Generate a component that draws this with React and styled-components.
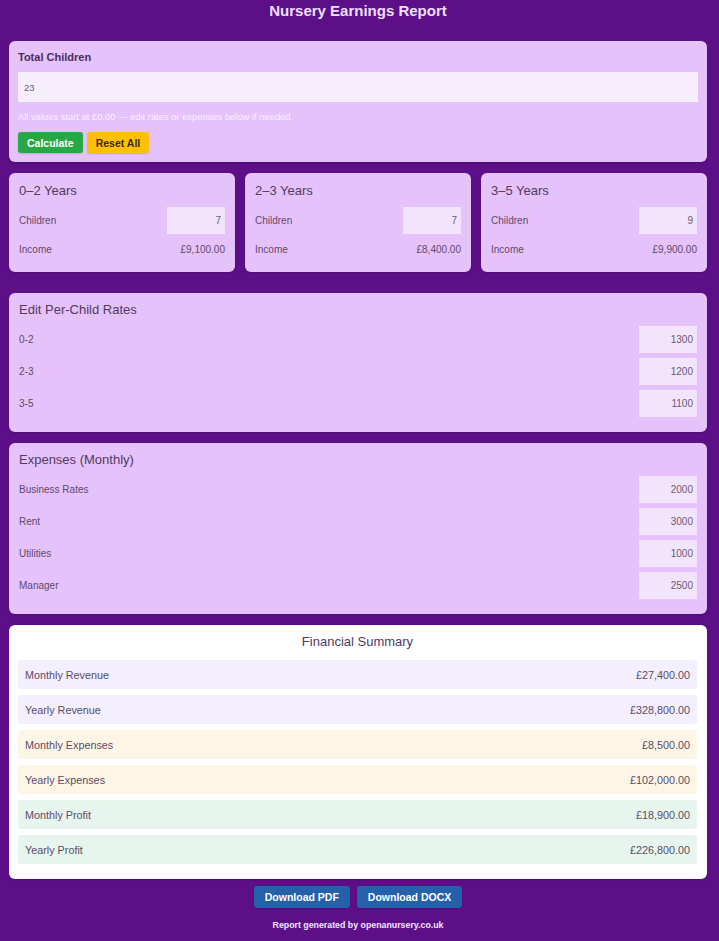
import React from "react"
import styled, { createGlobalStyle } from "styled-components"

const GlobalStyle = createGlobalStyle`
  html, body {
    margin: 0;
    padding: 0;
    background: #5d0f88;
    font-family: "Liberation Sans", Arial, sans-serif;
  }
`

const Page = styled.div`
  padding: 0 12px 8px 9px;
  min-height: 941px;
  box-sizing: border-box;
`

const Title = styled.h1`
  margin: 0 0 21px;
  padding-top: 2px;
  font-size: 15px;
  line-height: 18px;
  font-weight: bold;
  color: #efe0ff;
  text-align: center;
`

const Card = styled.section`
  background: ${(p) => (p.$white ? "#ffffff" : "#e6c2fb")};
  border-radius: 6px;
  padding: ${(p) => p.$pad || "10px 9px 10px 9px"};
  margin-bottom: ${(p) => p.$mb || "11px"};
  box-sizing: border-box;
  box-shadow: 0 1px 2px rgba(40, 0, 60, 0.3);
`

const Label = styled.div`
  font-size: 11px;
  font-weight: bold;
  color: #4a2f5c;
  line-height: 13px;
  margin-bottom: 8px;
`

const BigInput = styled.input`
  display: block;
  width: 100%;
  box-sizing: border-box;
  height: 30px;
  border: none;
  outline: none;
  background: #f6edfd;
  padding: 0 6px;
  font-family: inherit;
  font-size: 9.5px;
  color: #6a5a75;
`

const Hint = styled.div`
  font-size: 9.4px;
  color: #f8f0ff;
  margin: 10px 0 10px;
  line-height: 10px;
`

const Buttons = styled.div`
  display: flex;
  gap: ${(p) => p.$gap || "4px"};
  justify-content: ${(p) => (p.$center ? "center" : "flex-start")};
`

const Button = styled.button`
  border: none;
  border-radius: 3px;
  height: ${(p) => p.$h || "21px"};
  padding: 0 ${(p) => p.$px || "9px"};
  font-family: inherit;
  font-size: 10.5px;
  font-weight: bold;
  background: ${(p) => p.$bg};
  color: ${(p) => p.$fg};
  box-shadow: 0 1px 2px rgba(0, 0, 0, 0.15);
`

const AgeGrid = styled.div`
  display: grid;
  grid-template-columns: repeat(3, 1fr);
  gap: 10px;
  margin-bottom: 21px;
`

const CardTitle = styled.h2`
  margin: 0 0 ${(p) => p.$mb || "8px"};
  font-size: 13px;
  line-height: 16px;
  font-weight: normal;
  color: #4f3a61;
  text-align: ${(p) => (p.$center ? "center" : "left")};
`

const Row = styled.div`
  display: flex;
  align-items: center;
  justify-content: space-between;
  height: ${(p) => p.$h || "27px"};
  margin-top: ${(p) => p.$mt || "0"};
  margin-bottom: ${(p) => p.$mb || "5px"};
  font-size: 10px;
  color: #5b4a6b;
`

const SmallInput = styled.input`
  width: 58px;
  height: 27px;
  box-sizing: border-box;
  border: none;
  outline: none;
  background: #f2e4fc;
  text-align: right;
  padding: 0 4px;
  font-family: inherit;
  font-size: 10px;
  color: #6a5a75;
`

const SummaryRow = styled.div`
  display: flex;
  align-items: center;
  justify-content: space-between;
  height: 29px;
  padding: 0 7px;
  border-radius: 3px;
  margin-bottom: 6px;
  font-size: 10.8px;
  color: #5a4a68;
  background: ${(p) =>
    p.$kind === "rev" ? "#f3effe" : p.$kind === "exp" ? "#fdf6e6" : "#e6f6ee"};
  &:last-child {
    margin-bottom: 0;
  }
`

const Footer = styled.div`
  text-align: center;
  font-size: 8.8px;
  font-weight: bold;
  color: #f3e6ff;
  margin-top: 12px;
`

const ages = [
  { title: "0–2 Years", children: 7, income: "£9,100.00" },
  { title: "2–3 Years", children: 7, income: "£8,400.00" },
  { title: "3–5 Years", children: 9, income: "£9,900.00" },
]

const rates = [
  ["0-2", 1300],
  ["2-3", 1200],
  ["3-5", 1100],
]

const expenses = [
  ["Business Rates", 2000],
  ["Rent", 3000],
  ["Utilities", 1000],
  ["Manager", 2500],
]

const summary = [
  ["Monthly Revenue", "£27,400.00", "rev"],
  ["Yearly Revenue", "£328,800.00", "rev"],
  ["Monthly Expenses", "£8,500.00", "exp"],
  ["Yearly Expenses", "£102,000.00", "exp"],
  ["Monthly Profit", "£18,900.00", "pro"],
  ["Yearly Profit", "£226,800.00", "pro"],
]

export default function App() {
  return (
    <>
      <GlobalStyle />
      <Page>
        <Title>Nursery Earnings Report</Title>

        <Card $pad="10px 9px 9px 9px">
          <Label>Total Children</Label>
          <BigInput defaultValue="23" />
          <Hint>All values start at £0.00 — edit rates or expenses below if needed.</Hint>
          <Buttons>
            <Button $bg="#28a745" $fg="#ffffff">Calculate</Button>
            <Button $bg="#ffc107" $fg="#3a2a00">Reset All</Button>
          </Buttons>
        </Card>

        <AgeGrid>
          {ages.map((a) => (
            <Card key={a.title} $mb="0" $pad="10px 10px 16px 10px">
              <CardTitle>{a.title}</CardTitle>
              <Row>
                <span>Children</span>
                <SmallInput defaultValue={a.children} />
              </Row>
              <Row $h="14px" $mt="8px" $mb="0">
                <span>Income</span>
                <span>{a.income}</span>
              </Row>
            </Card>
          ))}
        </AgeGrid>

        <Card $pad="9px 10px 10px 10px">
          <CardTitle>Edit Per-Child Rates</CardTitle>
          {rates.map(([k, v]) => (
            <Row key={k}>
              <span>{k}</span>
              <SmallInput defaultValue={v} />
            </Row>
          ))}
        </Card>

        <Card $pad="9px 10px 10px 10px">
          <CardTitle>Expenses (Monthly)</CardTitle>
          {expenses.map(([k, v]) => (
            <Row key={k}>
              <span>{k}</span>
              <SmallInput defaultValue={v} />
            </Row>
          ))}
        </Card>

        <Card $white $mb="7px" $pad="9px 10px 15px 9px">
          <CardTitle $center $mb="10px">Financial Summary</CardTitle>
          {summary.map(([k, v, kind]) => (
            <SummaryRow key={k} $kind={kind}>
              <span>{k}</span>
              <span>{v}</span>
            </SummaryRow>
          ))}
        </Card>

        <Buttons $center $gap="7px">
          <Button $bg="#2561ab" $fg="#ffffff" $h="22px" $px="11px">Download PDF</Button>
          <Button $bg="#2561ab" $fg="#ffffff" $h="22px" $px="11px">Download DOCX</Button>
        </Buttons>
        <Footer>Report generated by openanursery.co.uk</Footer>
      </Page>
    </>
  )
}
